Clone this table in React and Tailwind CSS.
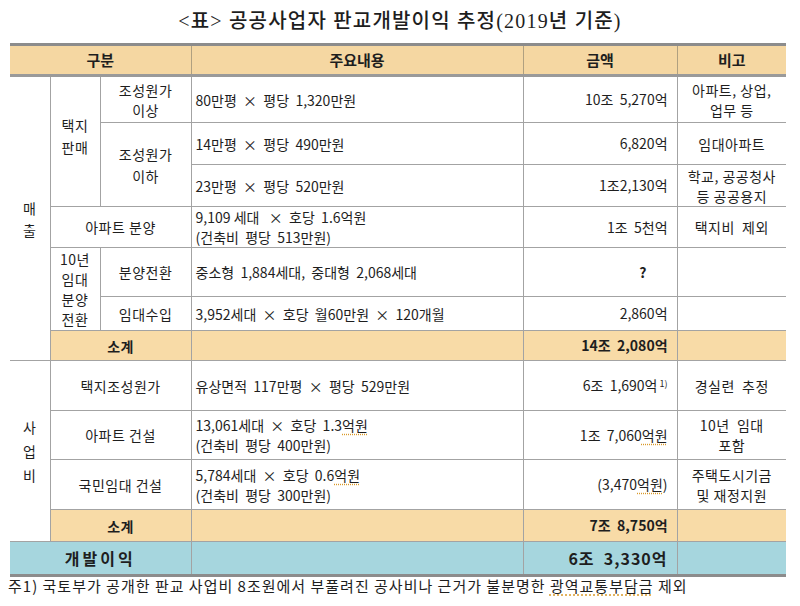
import React from "react";

const cell = "border border-[#a3a3a3] align-middle";
const label = `${cell} text-center leading-[20px] tracking-[0.5px]`;
const body = `${cell} text-left pl-[4px] leading-[20px] whitespace-pre`;
const amount = `${cell} text-right pr-[9px] whitespace-pre`;
const note = `${cell} text-center border-r-0 leading-[20px] tracking-[0.5px] whitespace-pre`;
const head = "border-x border-x-[#b0a080] border-t-[3px] border-t-[#8c8c8c] border-b-[3px] border-b-[#9a9a9a] font-bold text-[15px] text-center";
const dot = "underline decoration-dotted decoration-[#d99a2b] underline-offset-[3px]";

const App = () => {
  return (
    <div
      className="w-[800px] h-[606px] bg-white text-[#1e1e1e] overflow-hidden"
      style={{ fontFamily: '"Noto Sans CJK KR", "Noto Sans", sans-serif' }}
    >
      {/* ================= TITLE ================= */}
      <div
        className="h-[43px] flex items-center justify-center pb-[2px] text-[20px] font-medium tracking-[1.2px]"
        style={{ fontFamily: '"Liberation Serif", "Noto Sans CJK KR", serif' }}
      >
        &lt;표&gt; 공공사업자 판교개발이익 추정(2019년 기준)
      </div>

      {/* ================= TABLE ================= */}
      <table className="ml-[10px] w-[776px] table-fixed border-collapse text-[14px]">
        <colgroup>
          <col className="w-[40px]" />
          <col className="w-[50px]" />
          <col className="w-[91px]" />
          <col className="w-[332px]" />
          <col className="w-[154px]" />
          <col className="w-[109px]" />
        </colgroup>
        <thead>
          <tr className="h-[31px] bg-[#f5d7a2]">
            <th colSpan={3} className={`${head} border-l-0`}>구분</th>
            <th className={head}>주요내용</th>
            <th className={head}>금액</th>
            <th className={`${head} border-r-0`}>비고</th>
          </tr>
        </thead>
        <tbody>
          <tr className="h-[47px]">
            <td rowSpan={7} className={`${label} border-l-0 leading-[22px]`}>
              매<br />출
            </td>
            <td rowSpan={3} className={`${label} leading-[22px] pb-[12px]`}>
              택지<br />판매
            </td>
            <td className={label}>조성원가<br />이상</td>
            <td className={body}>80만평  ×  평당  1,320만원</td>
            <td className={amount}>10조  5,270억</td>
            <td className={note}>아파트, 상업,{"\n"}업무 등</td>
          </tr>
          <tr className="h-[42px]">
            <td rowSpan={2} className={`${label} leading-[22px]`}>
              조성원가<br />이하
            </td>
            <td className={body}>14만평  ×  평당  490만원</td>
            <td className={amount}>6,820억</td>
            <td className={note}>임대아파트</td>
          </tr>
          <tr className="h-[42px]">
            <td className={body}>23만평  ×  평당  520만원</td>
            <td className={amount}>1조2,130억</td>
            <td className={note}>학교, 공공청사{"\n"}등 공공용지</td>
          </tr>
          <tr className="h-[41px]">
            <td colSpan={2} className={label}>아파트  분양</td>
            <td className={body}>9,109 세대   ×  호당  1.6억원{"\n"}(건축비  평당  513만원)</td>
            <td className={amount}>1조  5천억</td>
            <td className={note}>택지비  제외</td>
          </tr>
          <tr className="h-[49px]">
            <td rowSpan={2} className={`${label} leading-[20px]`}>
              10년<br />임대<br />분양<br />전환
            </td>
            <td className={label}>분양전환</td>
            <td className={body}>중소형  1,884세대,  중대형  2,068세대</td>
            <td className={`${amount} pr-[30px] font-bold`}>?</td>
            <td className={note}></td>
          </tr>
          <tr className="h-[34px]">
            <td className={label}>임대수입</td>
            <td className={body}>3,952세대  ×  호당  월60만원  ×  120개월</td>
            <td className={amount}>2,860억</td>
            <td className={note}></td>
          </tr>
          <tr className="h-[30px] bg-[#f8dba7]">
            <td colSpan={2} className={`${label} font-bold`}>소계</td>
            <td className={body}></td>
            <td className={`${amount} font-bold`}>14조  2,080억</td>
            <td className={note}></td>
          </tr>

          <tr className="h-[50px]">
            <td rowSpan={4} className={`${label} border-l-0 leading-[24px]`}>
              사<br />업<br />비
            </td>
            <td colSpan={2} className={label}>택지조성원가</td>
            <td className={body}>유상면적  117만평  ×  평당  529만원</td>
            <td className={`${amount} pr-[5px]`}>
              6조  1,690억<sup className="text-[9px] ml-[2px]">1)</sup>
            </td>
            <td className={note}>경실련  추정</td>
          </tr>
          <tr className="h-[49px]">
            <td colSpan={2} className={label}>아파트  건설</td>
            <td className={body}>
              13,061세대  ×  호당  1.3<span className={dot}>억원</span>{"\n"}(건축비  평당  400만원)
            </td>
            <td className={`${amount} pr-[7px]`}>
              1조  7,060<span className={dot}>억원</span>
            </td>
            <td className={note}>10년  임대{"\n"}포함</td>
          </tr>
          <tr className="h-[50px]">
            <td colSpan={2} className={label}>국민임대  건설</td>
            <td className={body}>
              5,784세대  ×  호당  0.6<span className={dot}>억원</span>{"\n"}(건축비  평당  300만원)
            </td>
            <td className={`${amount} pr-[5px]`}>
              (3,470<span className={dot}>억원</span>)
            </td>
            <td className={note}>주택도시기금{"\n"}및 재정지원</td>
          </tr>
          <tr className="h-[32px] bg-[#f8dba7]">
            <td colSpan={2} className={`${label} font-bold`}>소계</td>
            <td className={body}></td>
            <td className={`${amount} font-bold`}>7조  8,750억</td>
            <td className={note}></td>
          </tr>

          <tr className="h-[34px] bg-[#a6d6de]">
            <td colSpan={3} className={`${label} border-l-0 border-b-[3px] border-b-[#8c8c8c] font-bold text-[16px] tracking-[3px]`}>
              개발이익
            </td>
            <td className={`${body} border-b-[3px] border-b-[#8c8c8c]`}></td>
            <td className={`${amount} border-b-[3px] border-b-[#8c8c8c] font-bold text-[16px] tracking-[1px]`}>
              6조  3,330억
            </td>
            <td className={`${note} border-b-[3px] border-b-[#8c8c8c]`}></td>
          </tr>
        </tbody>
      </table>

      {/* ================= FOOTNOTE ================= */}
      <div className="pl-[8px] text-[15px] leading-[18px] tracking-[1px] whitespace-pre">
        주1) 국토부가 공개한 판교 사업비 8조원에서 부풀려진 공사비나 근거가 불분명한 <span className={dot}>광역교통부담금</span> 제외
      </div>
    </div>
  );
};

export default App;
